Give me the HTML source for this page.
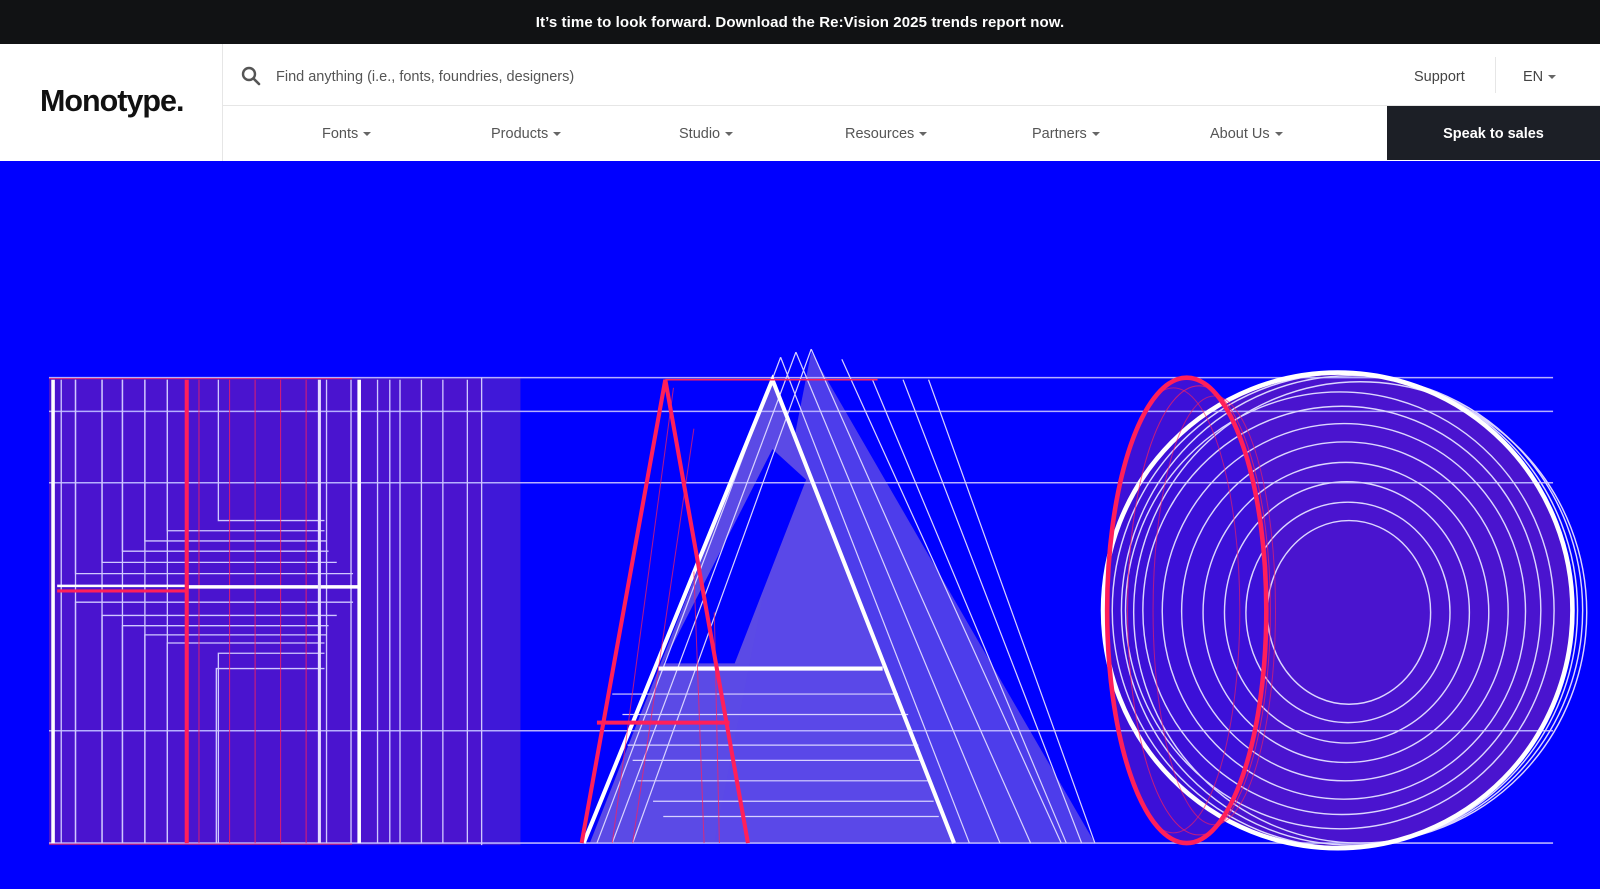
<!DOCTYPE html>
<html><head><meta charset="utf-8"><style>
*{margin:0;padding:0;box-sizing:border-box}
body{width:1600px;height:889px;overflow:hidden;font-family:"Liberation Sans",sans-serif;background:#0000ff;position:relative}
.top{position:absolute;left:0;top:0;width:1600px;height:44px;background:#111214;color:#fff;font-weight:bold;font-size:15px;text-align:center;line-height:45px;letter-spacing:.1px}
.hdr{position:absolute;left:0;top:44px;width:1600px;height:117px;background:#fff}
.logo{position:absolute;left:0;top:0;width:223px;height:117px;border-right:1px solid #e6e6e6;font-weight:bold;font-size:30.5px;letter-spacing:-1px;color:#111;padding:40px 0 0 40px}
.search{position:absolute;left:223px;top:0;right:0;height:62px;border-bottom:1px solid #e6e6e6}
.search .ph{position:absolute;left:53px;top:25px;font-size:14.5px;color:#555}
.search svg{position:absolute;left:18px;top:22px}
.sup{position:absolute;left:1414px;top:25px;font-size:14.5px;color:#444}
.sep{position:absolute;left:1495px;top:13px;width:1px;height:36px;background:#e6e6e6}
.en{position:absolute;left:1523px;top:25px;font-size:14.5px;color:#444}
.nav{position:absolute;left:223px;top:62px;height:55px;right:213px}
.nav span{position:absolute;top:20px;font-size:14.5px;color:#555}
.car{display:inline-block;width:0;height:0;border-left:4px solid transparent;border-right:4px solid transparent;border-top:4px solid #666;margin-left:5px;vertical-align:middle}
.sales{position:absolute;right:0;top:62px;width:213px;height:54px;background:#1c1f26;color:#fff;font-weight:bold;font-size:14.5px;text-align:center;line-height:56px}
svg.art{position:absolute;left:0;top:0}
</style></head><body>
<div class="top">It’s time to look forward. Download the Re:Vision 2025 trends report now.</div>
<div class="hdr">
<div class="logo">Monotype.</div>
<div class="search"><svg width="20" height="20" viewBox="0 0 20 20"><circle cx="8" cy="8" r="6" fill="none" stroke="#555" stroke-width="2.4"/><path d="M12.5 12.5L18 18" stroke="#555" stroke-width="2.6" stroke-linecap="round"/></svg><div class="ph">Find anything (i.e., fonts, foundries, designers)</div></div>
<div class="sup">Support</div><div class="sep"></div><div class="en">EN<span class="car"></span></div>
<div class="nav">
<span style="left:99px">Fonts<i class="car"></i></span>
<span style="left:268px">Products<i class="car"></i></span>
<span style="left:456px">Studio<i class="car"></i></span>
<span style="left:622px">Resources<i class="car"></i></span>
<span style="left:809px">Partners<i class="car"></i></span>
<span style="left:987px">About Us<i class="car"></i></span>
</div>
<div class="sales">Speak to sales</div>
</div>
<svg class="art" width="1600" height="889" viewBox="0 0 1568 871" preserveAspectRatio="none">
<rect x="48" y="370" width="424" height="458" fill="#4a14cf"/>
<rect x="472" y="370" width="38" height="458" fill="#3f18d8"/>
<polygon points="757,372 578,826 935,826" fill="#5b4ae6"/>
<polygon points="795,345 700,826 1073,826" fill="#5a48e8" opacity=".85"/>
<polygon points="757,440 650,650 720,650 790,470" fill="#0000ff"/>
<ellipse cx="1311" cy="598" rx="228" ry="232" fill="#4a14cf"/>
<ellipse cx="1163" cy="598" rx="80" ry="228" fill="#3c10d8"/>
<g stroke="#b6b0ff" stroke-width="1.5">
<line x1="48" y1="370" x2="1522" y2="370"/><line x1="48" y1="403" x2="1522" y2="403"/>
<line x1="48" y1="473" x2="1522" y2="473"/><line x1="48" y1="716" x2="1522" y2="716"/>
<line x1="48" y1="826" x2="1522" y2="826"/></g>
<g stroke="#d0c8ff" stroke-width="1.3" fill="none">
<line x1="60" y1="372" x2="60" y2="826"/><line x1="74" y1="372" x2="74" y2="826"/>
<line x1="100" y1="372" x2="100" y2="826"/><line x1="120" y1="372" x2="120" y2="826"/>
<line x1="142" y1="372" x2="142" y2="826"/><line x1="164" y1="372" x2="164" y2="826"/>
<line x1="320" y1="372" x2="320" y2="826"/><line x1="344" y1="372" x2="344" y2="826"/>
<line x1="370" y1="372" x2="370" y2="826"/><line x1="382" y1="372" x2="382" y2="826"/>
<line x1="392" y1="372" x2="392" y2="826"/><line x1="413" y1="372" x2="413" y2="826"/>
<line x1="434" y1="372" x2="434" y2="826"/><line x1="458" y1="372" x2="458" y2="826"/>
<line x1="472" y1="370" x2="472" y2="828"/>
<path d="M74 372V562H346M100 372V551H330M120 372V540H322M142 372V530H320M164 372V520H318M214 372V510H318"/>
<path d="M74 826V590H346M100 826V603H330M120 826V613H322M142 826V622H320M164 826V630H318M214 826V640H318M212 826V655H318"/>
</g>
<g stroke="#ff1f5a" stroke-width="1" opacity=".8">
<line x1="195" y1="372" x2="195" y2="826"/><line x1="225" y1="372" x2="225" y2="826"/><line x1="250" y1="372" x2="250" y2="826"/><line x1="275" y1="372" x2="275" y2="826"/><line x1="300" y1="372" x2="300" y2="826"/>
<line x1="48" y1="371" x2="345" y2="371"/><line x1="48" y1="827" x2="345" y2="827"/></g>
<g stroke="#fff" stroke-width="3.5" fill="none">
<line x1="52" y1="372" x2="52" y2="826"/><line x1="352" y1="372" x2="352" y2="826"/>
<line x1="185" y1="575" x2="352" y2="575"/><line x1="56" y1="574" x2="183" y2="574" stroke-width="2.5"/>
<line x1="313" y1="372" x2="313" y2="826" stroke="#e6ddff" stroke-width="3"/></g>
<g stroke="#ff1f5a" fill="none"><line x1="183" y1="372" x2="183" y2="826" stroke-width="4"/>
<line x1="56" y1="579" x2="183" y2="579" stroke-width="3"/></g>
<g stroke="#d8d2ff" stroke-width="1.2" fill="none">
<path d="M765 350L585 826M765 350L950 826M780 345L600 826M780 345L980 826M795 342L620 826M795 342L1010 826M825 352L1040 826M855 372L1045 826M885 372L1060 826M910 372L1073 826"/>
<path d="M600 680H880M610 700H890M615 730H900M620 745H905M625 765H910M640 785H915M650 800H920"/>
</g>
<g stroke="#fff" stroke-width="4" fill="none" stroke-linejoin="miter">
<path d="M572 826L757 372L935 826"/><path d="M645 655H865"/></g>
<g stroke="#ff1f5a" fill="none">
<path d="M570 826L652 372L733 826" stroke-width="4"/>
<path d="M585 708H715" stroke-width="4"/>
<path d="M600 826L660 380M620 826L680 420M690 826L680 560M705 826L700 600" stroke-width="1" opacity=".7"/>
<line x1="652" y1="372" x2="860" y2="372" stroke-width="1.5"/>
</g>
<g fill="none" stroke="#dcd6ff" stroke-width="1.4">
<ellipse cx="1318" cy="598" rx="228" ry="232"/><ellipse cx="1325" cy="598" rx="226" ry="230"/>
<ellipse cx="1333" cy="600" rx="222" ry="226"/>
<ellipse cx="1313" cy="598" rx="210" ry="214"/><ellipse cx="1315" cy="598" rx="195" ry="200"/>
<ellipse cx="1317" cy="599" rx="178" ry="184"/><ellipse cx="1318" cy="599" rx="160" ry="166"/>
<ellipse cx="1319" cy="600" rx="140" ry="147"/><ellipse cx="1320" cy="600" rx="120" ry="128"/>
<ellipse cx="1321" cy="600" rx="100" ry="108"/><ellipse cx="1322" cy="600" rx="80" ry="90"/>
</g>
<ellipse cx="1311" cy="598" rx="230" ry="233" fill="none" stroke="#fff" stroke-width="4.5"/>
<g fill="none" stroke="#ff1f5a">
<ellipse cx="1163" cy="598" rx="78" ry="228" stroke-width="4.5"/>
<ellipse cx="1175" cy="598" rx="70" ry="220" stroke-width="1" opacity=".7"/>
<ellipse cx="1190" cy="598" rx="60" ry="210" stroke-width="1" opacity=".6"/>
<ellipse cx="1150" cy="598" rx="65" ry="218" stroke-width="1" opacity=".6"/>
</g>
</svg>
</body></html>
